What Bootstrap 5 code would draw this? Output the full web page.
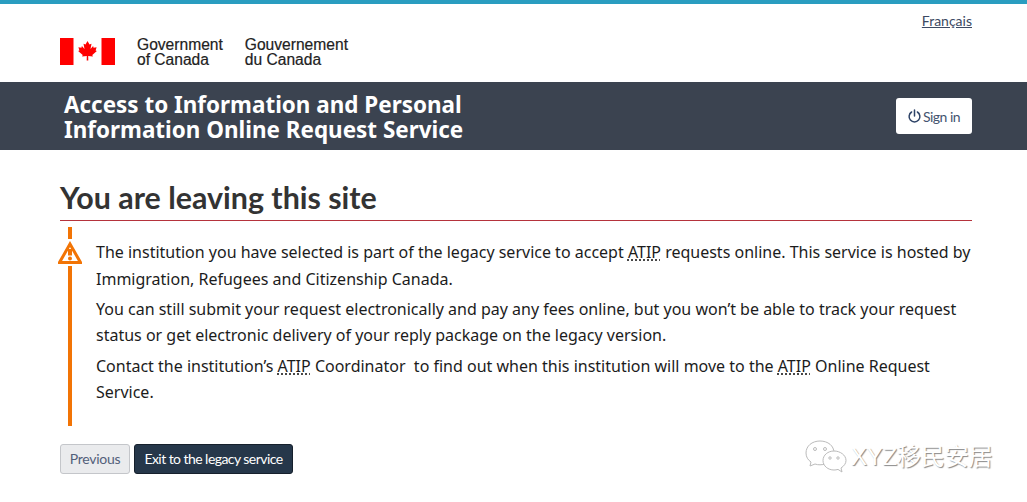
<!DOCTYPE html>
<html lang="en">
<head>
    <meta charset="UTF-8">
    <meta name="viewport" content="width=device-width, initial-scale=1.0">
    <title>You are leaving this site</title>
    <link href="https://cdn.jsdelivr.net/npm/bootstrap@5.3.2/dist/css/bootstrap.min.css" rel="stylesheet">
    <style>
        body {
            font-family: "Noto Sans", sans-serif;
            font-size: 16px;
            color: #2e2e2e;
            height: 502px;
            overflow: hidden;
            position: relative;
        }
        .page-top {
            border-top: 4px solid #2a9dc0;
            height: 82px;
            padding: 0 55px 0 60px;
        }
        .lang-link {
            font-family: Lato, sans-serif;
            font-size: 14px;
            color: #3c4a63;
            line-height: 17px;
            padding-top: 8px;
        }
        .sig-block {
            margin-top: 31px;
            gap: 22px;
        }
        .sig-text {
            font-family: "Liberation Sans", sans-serif;
            font-size: 15.6px;
            line-height: 15px;
            color: #222;
            margin-top: 2px;
            -webkit-text-stroke: 0.2px #222;
        }
        .title-band {
            background: #3b4350;
            height: 68px;
            padding: 0 55px 0 64px;
        }
        .app-title {
            font-family: "Noto Sans", sans-serif;
            font-weight: 700;
            font-size: 22.45px;
            line-height: 25px;
            color: #fff;
            padding-top: 1px;
        }
        .signin-btn {
            font-family: Lato, sans-serif;
            font-size: 14px;
            letter-spacing: -0.5px;
            background: #fff;
            color: #44546f;
            border: 0;
            border-radius: 3px;
            width: 76px;
            height: 36px;
            padding: 0;
            gap: 2px;
        }
        .main-area { padding: 25px 55px 0 60px; }
        .leave-title {
            font-family: Lato, sans-serif;
            font-weight: 700;
            font-size: 30.4px;
            line-height: 44px;
            color: #333;
            margin: 0;
            border-bottom: 1px solid #b5333c;
            padding-bottom: 1px;
        }
        .warn-box {
            border-left: 4px solid #f27405;
            margin: 6px 0 0 8px;
            padding: 12px 0 19px 24px;
            height: 199px;
            position: relative;
            color: #1c1c1c;
        }
        .warn-box p {
            font-size: 16px;
            line-height: 26.5px;
            margin: 0 0 3.8px;
        }
        .warn-icon {
            position: absolute;
            left: -14px;
            top: 12px;
            background: #fff;
            padding: 2px 0;
            display: block;
        }
        abbr.atip-abbr {
            text-decoration: underline dotted;
            text-underline-offset: 2px;
            cursor: help;
        }
        .btn-row { margin-top: 18px; gap: 4px; }
        .prev-btn, .exit-btn {
            font-family: Lato, sans-serif;
            font-size: 14px;
            line-height: 26px;
            height: 30px;
            border-radius: 3px;
            padding: 0;
            white-space: nowrap;
        }
        .prev-btn {
            background: #eaebed;
            border: 1px solid #c4c6ca;
            color: #52607a;
            width: 70px;
            letter-spacing: -0.3px;
        }
        .exit-btn {
            background: #26374a;
            border: 1px solid #16202c;
            color: #fff;
            width: 159px;
            letter-spacing: -0.55px;
        }
        .wm-mark {
            position: absolute;
            left: 805px;
            top: 438px;
            gap: 4px;
        }
        .wm-text {
            font-family: "Liberation Sans", "Noto Sans CJK SC", sans-serif;
            font-size: 24px;
            line-height: 38px;
            letter-spacing: -0.2px;
            color: #fff;
            text-shadow: 1px 1px 1px #888;
        }
    </style>
</head>
<body>
    <!-- Government header -->
    <div class="page-top d-flex justify-content-between align-items-start">
        <div class="sig-block d-flex align-items-center">
            <svg width="55" height="27" viewBox="0 0 55 27">
                <rect width="55" height="27" fill="#fff"/>
                <rect width="13.5" height="27" fill="#f00"/>
                <rect x="41.5" width="13.5" height="27" fill="#f00"/>
                <path fill="#f00" d="M27.500 3l-2 3.600-2-.9 1 5.300-2.600-2.900-.5 1.600-3-.5 1 3.200-1.300.7 4.600 3.800-.6 1.700 4.700-.6-.1 4.500h1.600l-.1-4.500 4.700.6-.6-1.700 4.600-3.800-1.300-.7 1-3.200-3 .5-.5-1.600-2.600 2.900 1-5.300-2 .9z"/>
            </svg>
            <div class="sig-text">Government<br>of Canada</div>
            <div class="sig-text">Gouvernement<br>du Canada</div>
        </div>
        <a class="lang-link" href="#">Français</a>
    </div>

    <!-- Service title -->
    <div class="title-band d-flex justify-content-between align-items-center">
        <div class="app-title">Access to Information and Personal<br>Information Online Request Service</div>
        <button class="signin-btn btn d-flex align-items-center justify-content-center" type="button">
            <svg width="13" height="14" viewBox="0 0 13 14" fill="none" stroke="#2f4468" stroke-width="1.500" stroke-linecap="round">
                <path d="M6.500 1v6"/>
                <path d="M3.600 3a5.400 5.400 0 1 0 5.800 0"/>
            </svg>
            <span>Sign in</span>
        </button>
    </div>

    <!-- Main content -->
    <div class="main-area">
        <h1 class="leave-title">You are leaving this site</h1>
        <div class="warn-box">
            <svg class="warn-icon" width="24" height="27" viewBox="0 0 24 23">
                <path d="M12 3 L22.500 21.500 H1.500 Z" fill="#fff" stroke="#f27405" stroke-width="3"/>
                <path d="M12 8v6.500" stroke="#f27405" stroke-width="4"/>
                <circle cx="12" cy="17.500" r="2" fill="#f27405"/>
            </svg>
            <p>The institution you have selected is part of the legacy service to accept <abbr class="atip-abbr" title="Access to Information and Privacy">ATIP</abbr> requests online. This service is hosted by Immigration, Refugees and Citizenship Canada.</p>
            <p>You can still submit your request electronically and pay any fees online, but you won’t be able to track your request status or get electronic delivery of your reply package on the legacy version.</p>
            <p>Contact the institution’s <abbr class="atip-abbr" title="Access to Information and Privacy">ATIP</abbr> Coordinator&nbsp; to find out when this institution will move to the <abbr class="atip-abbr" title="Access to Information and Privacy">ATIP</abbr> Online Request Service.</p>
        </div>
        <div class="btn-row d-flex">
            <button class="prev-btn btn" type="button">Previous</button>
            <button class="exit-btn btn" type="button">Exit to the legacy service</button>
        </div>
    </div>

    <!-- Watermark -->
    <div class="wm-mark d-flex align-items-center">
        <svg width="42" height="34" viewBox="0 0 42 34" fill="#fff" stroke="#bbb" stroke-width="1">
            <path d="M15 1C7 1 1 6 1 13c0 4 2 7 5 9l-1 4 5-2c2 .6 3 .8 5 .8 8 0 14-5 14-12S23 1 15 1z"/>
            <path d="M29 11c-6 0-11 4-11 9.500s5 9.500 11 9.500c1.500 0 2.500-.2 4-.6l4 2.600-1-4c3-2 5-4.500 5-7.500 0-5.500-6-9.500-12-9.500z"/>
            <circle cx="10" cy="9" r="1.500"/><circle cx="20" cy="9" r="1.500"/>
            <circle cx="25" cy="18" r="1.200"/><circle cx="33" cy="18" r="1.200"/>
        </svg>
        <span class="wm-text">XYZ移民安居</span>
    </div>

    <script src="https://cdn.jsdelivr.net/npm/bootstrap@5.3.2/dist/js/bootstrap.bundle.min.js"></script>
</body>
</html>
